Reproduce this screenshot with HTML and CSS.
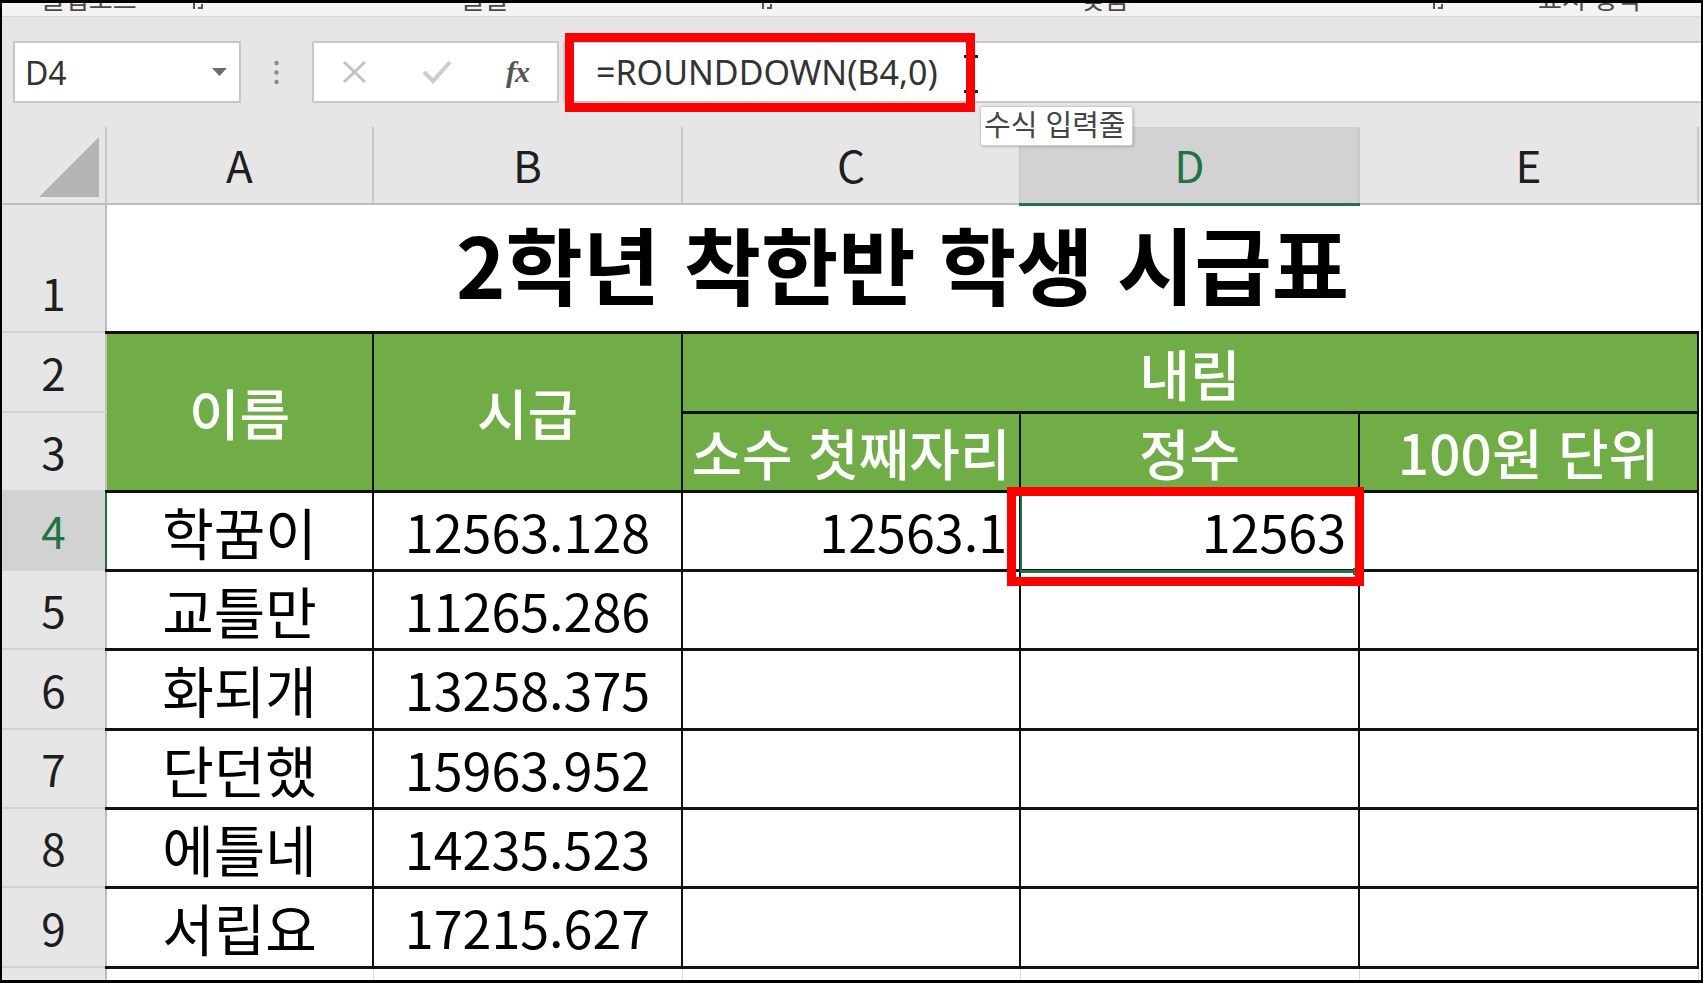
FILE: index.html
```html
<!DOCTYPE html>
<html lang="ko">
<head>
    <meta charset="UTF-8">
    <title>시급표 - ROUNDDOWN</title>
    <link rel="stylesheet" href="styles.css">
</head>
<body>

<div class="window">
    <!-- bottom edge of the ribbon, group labels cut off -->
    <div class="ribbon-strip">
        <span class="ribbon-label">클립보드</span>
        <span class="launcher"><svg width="14" height="9" viewBox="0 0 14 9"><path d="M2 0v6M6 5l5 0M10 1v5" stroke="#555" stroke-width="2" fill="none"/></svg></span>
        <span class="ribbon-label">글꼴</span>
        <span class="launcher"><svg width="14" height="9" viewBox="0 0 14 9"><path d="M2 0v6M6 5l5 0M10 1v5" stroke="#555" stroke-width="2" fill="none"/></svg></span>
        <span class="ribbon-label">맞춤</span>
        <span class="launcher"><svg width="14" height="9" viewBox="0 0 14 9"><path d="M2 0v6M6 5l5 0M10 1v5" stroke="#555" stroke-width="2" fill="none"/></svg></span>
        <span class="ribbon-label">표시 형식</span>
    </div>

    <div class="formula-bar">
        <div class="name-box">
            <span>D4</span>
            <svg width="15" height="8" viewBox="0 0 15 8"><polygon points="0,0 15,0 7.5,8" fill="#6b6b6b"/></svg>
        </div>
        <div class="grip">
            <svg width="5" height="25" viewBox="0 0 5 25"><circle cx="2.5" cy="3" r="2.2" fill="#8a8a8a"/><circle cx="2.5" cy="12.5" r="2.2" fill="#8a8a8a"/><circle cx="2.5" cy="22" r="2.2" fill="#8a8a8a"/></svg>
        </div>
        <div class="fx-box">
            <svg class="icon-cancel" width="25" height="22" viewBox="0 0 25 22"><path d="M2 1L23 21M23 1L2 21" stroke="#c2c2c2" stroke-width="3" fill="none"/></svg>
            <svg class="icon-enter" width="30" height="24" viewBox="0 0 30 24"><path d="M2 12L11 21L28 2" stroke="#cdcdcd" stroke-width="4" fill="none"/></svg>
            <span class="fx">fx</span>
        </div>
        <div class="formula-input">=ROUNDDOWN(B4,0)</div>
    </div>

    <table class="sheet">
        <colgroup>
            <col class="w-rh"><col class="w-a"><col class="w-b"><col class="w-c"><col class="w-d"><col class="w-e"><col class="w-edge">
        </colgroup>
        <tr class="row-colhead">
            <th class="corner"><svg width="60" height="60" viewBox="0 0 60 60"><polygon points="60,0 60,60 0,60" fill="#b4b4b4"/></svg></th>
            <th class="ch">A</th>
            <th class="ch">B</th>
            <th class="ch">C</th>
            <th class="ch is-active">D</th>
            <th class="ch">E</th>
            <th class="ch-edge"></th>
        </tr>
        <tr class="row-title">
            <th class="rh">1</th>
            <td class="title" colspan="5">2학년 착한반 학생 시급표</td>
            <td class="edge"></td>
        </tr>
        <tr class="row-80">
            <th class="rh">2</th>
            <td class="head col-a" rowspan="2">이름</td>
            <td class="head" rowspan="2">시급</td>
            <td class="head" colspan="3">내림</td>
            <td class="edge"></td>
        </tr>
        <tr class="row-79">
            <th class="rh">3</th>
            <td class="head">소수 첫째자리</td>
            <td class="head">정수</td>
            <td class="head">100원 단위</td>
            <td class="edge"></td>
        </tr>
        <tr class="row-79">
            <th class="rh is-active">4</th>
            <td class="cell col-a">학꿈이</td>
            <td class="cell">12563.128</td>
            <td class="cell num">12563.1</td>
            <td class="cell num">12563</td>
            <td class="cell"></td>
            <td class="edge"></td>
        </tr>
        <tr class="row-79">
            <th class="rh">5</th>
            <td class="cell col-a">교틀만</td>
            <td class="cell">11265.286</td>
            <td class="cell"></td>
            <td class="cell"></td>
            <td class="cell"></td>
            <td class="edge"></td>
        </tr>
        <tr class="row-80">
            <th class="rh">6</th>
            <td class="cell col-a">화되개</td>
            <td class="cell">13258.375</td>
            <td class="cell"></td>
            <td class="cell"></td>
            <td class="cell"></td>
            <td class="edge"></td>
        </tr>
        <tr class="row-79">
            <th class="rh">7</th>
            <td class="cell col-a">단던했</td>
            <td class="cell">15963.952</td>
            <td class="cell"></td>
            <td class="cell"></td>
            <td class="cell"></td>
            <td class="edge"></td>
        </tr>
        <tr class="row-79">
            <th class="rh">8</th>
            <td class="cell col-a">에틀네</td>
            <td class="cell">14235.523</td>
            <td class="cell"></td>
            <td class="cell"></td>
            <td class="cell"></td>
            <td class="edge"></td>
        </tr>
        <tr class="row-80">
            <th class="rh">9</th>
            <td class="cell col-a">서립요</td>
            <td class="cell">17215.627</td>
            <td class="cell"></td>
            <td class="cell"></td>
            <td class="cell"></td>
            <td class="edge"></td>
        </tr>
        <tr class="row-tail">
            <th class="rh"></th>
            <td class="grid"></td>
            <td class="grid"></td>
            <td class="grid"></td>
            <td class="grid"></td>
            <td class="grid"></td>
            <td class="edge"></td>
        </tr>
    </table>

    <!-- overlays: selection, mouse cursor, tooltip, red callouts -->
    <div class="selection"><span class="fill-handle"></span></div>
    <svg class="ibeam" width="16" height="38" viewBox="0 0 16 38"><path d="M1 1.5h5M10 1.5h5M1 36.5h5M10 36.5h5" stroke="#222" stroke-width="3" fill="none"/><path d="M8 3v32" stroke="#fff" stroke-width="1"/></svg>
    <div class="tooltip">수식 입력줄</div>
    <div class="callout formula-callout"></div>
    <div class="callout cell-callout"></div>
</div>

</body>
</html>
```

FILE: styles.css
```css
* {
    box-sizing: border-box;
}
body {
    margin: 0;
    font-family: "Noto Sans CJK KR", "Noto Sans", sans-serif;
    background: #fff;
}
.window {
    position: relative;
    width: 1703px;
    height: 983px;
    border: solid #000;
    border-width: 3px 2px 3px 2px;
    overflow: hidden;
    background: #fff;
}

/* ribbon bottom edge */
.ribbon-strip {
    height: 14px;
    background: #f3f3f3;
    border-bottom: 1px solid #d6d6d6;
    display: grid;
    grid-template-columns: 151px 269px 300px 320px 351px 106px 1fr;
    align-items: start;
    padding-left: 39px;
    overflow: hidden;
}
.ribbon-label {
    font-size: 26px;
    line-height: 26px;
    margin-top: -18px;
    color: #4a4a4a;
    white-space: nowrap;
}
.launcher svg {
    display: block;
}

/* formula bar */
.formula-bar {
    height: 110px;
    background: #e6e6e6;
    display: flex;
    align-items: center;
    padding-left: 11px;
}
.name-box {
    width: 228px;
    height: 62px;
    background: #fff;
    border: 2px solid #c6c6c6;
    display: flex;
    align-items: center;
    justify-content: space-between;
    padding: 0 12px 0 10px;
    font-family: "Noto Sans", sans-serif;
    font-size: 32px;
    color: #333;
}
.grip {
    margin-left: 33px;
    display: flex;
}
.fx-box {
    margin-left: 33px;
    width: 247px;
    height: 62px;
    background: #fff;
    border: 2px solid #c8c8c8;
    border-radius: 2px;
    display: flex;
    align-items: center;
    padding-left: 28px;
}
.icon-enter {
    margin-left: 55px;
}
.fx {
    margin-left: 54px;
    font-family: "Liberation Serif", serif;
    font-style: italic;
    font-weight: bold;
    font-size: 30px;
    color: #555;
    letter-spacing: -1px;
}
.formula-input {
    flex: 1;
    margin-left: 4px;
    height: 62px;
    background: #fff;
    border: 2px solid #c8c8c8;
    border-right: none;
    display: flex;
    align-items: center;
    padding-left: 31px;
    font-family: "Noto Sans", sans-serif;
    font-size: 34px;
    color: #333;
}

/* worksheet */
.sheet {
    width: 1699px;
    table-layout: fixed;
    border-collapse: collapse;
}
.w-rh { width: 104px; }
.w-a { width: 267px; }
.w-b { width: 309px; }
.w-c { width: 338px; }
.w-d { width: 339px; }
.w-e { width: 339px; }
.w-edge { width: 3px; }

.row-colhead { height: 77px; }
.row-title { height: 128px; }
.row-80 { height: 80px; }
.row-79 { height: 79px; }
.row-tail { height: 13px; }

.sheet th, .sheet td {
    padding: 0;
    line-height: 1;
}
.corner {
    background: #e6e6e6;
    border-right: 2px solid #c9c9c9;
    border-bottom: 2px solid #bdbdbd;
    text-align: right;
    vertical-align: bottom;
    padding: 0 6px 6px 0 !important;
    font-size: 0;
}
.ch {
    background: #e6e6e6;
    border-right: 2px solid #c9c9c9;
    border-bottom: 2px solid #bdbdbd;
    font-size: 44px;
    font-weight: normal;
    color: #1e1e1e;
    vertical-align: bottom;
    padding-bottom: 17px !important;
}
.ch.is-active {
    background: #d2d2d2;
    color: #217346;
    border-bottom: 3px solid #217346;
}
.ch-edge {
    background: #e6e6e6;
    border-bottom: 2px solid #bdbdbd;
}
.rh {
    background: #e6e6e6;
    border-right: 2px solid #bdbdbd;
    border-bottom: 2px solid #d3d3d3;
    font-size: 44px;
    font-weight: normal;
    color: #1e1e1e;
    text-align: center;
    vertical-align: bottom;
    padding-bottom: 17px !important;
}
.rh.is-active {
    background: #d2d2d2;
    color: #217346;
    border-right: 2px solid #217346;
}
.title {
    text-align: center;
    vertical-align: middle;
    font-size: 84px;
    font-weight: bold;
    color: #000;
    padding-bottom: 10px !important;
}
.head {
    background: #70ad47;
    color: #fff;
    font-size: 55px;
    font-weight: 500;
    text-align: center;
    vertical-align: middle;
    border: solid #111;
    border-width: 3px 2px;
    white-space: nowrap;
}
.cell {
    font-size: 52px;
    color: #000;
    text-align: center;
    vertical-align: middle;
    border: solid #111;
    border-width: 3px 2px;
    white-space: nowrap;
}
.cell.col-a {
    font-size: 56px;
}
.cell.num {
    text-align: right;
    padding-right: 12px;
}
.col-a {
    border-left: none;
}
.grid {
    border-right: 1px solid #dadada;
}
.edge {
    border: none;
}

/* overlays */
.selection {
    position: absolute;
    left: 1018px;
    top: 488px;
    width: 334px;
    height: 82px;
    border-left: 2px solid #217346;
    border-bottom: 3px solid #217346;
}
.fill-handle {
    position: absolute;
    right: -5px;
    bottom: -5px;
    width: 6px;
    height: 7px;
    background: #217346;
}
.ibeam {
    position: absolute;
    left: 961px;
    top: 52px;
}
.tooltip {
    position: absolute;
    left: 978px;
    top: 103px;
    width: 153px;
    height: 40px;
    background: #fff;
    border: 1px solid #cdcdcd;
    border-radius: 3px;
    box-shadow: 1px 1px 3px rgba(0, 0, 0, 0.2);
    padding-left: 3px;
    font-size: 29px;
    line-height: 33px;
    color: #444;
    white-space: nowrap;
}
.callout {
    position: absolute;
    border: 9px solid #ff0000;
}
.formula-callout {
    left: 563px;
    top: 30px;
    width: 410px;
    height: 79px;
}
.cell-callout {
    left: 1005px;
    top: 484px;
    width: 357px;
    height: 99px;
}
```
